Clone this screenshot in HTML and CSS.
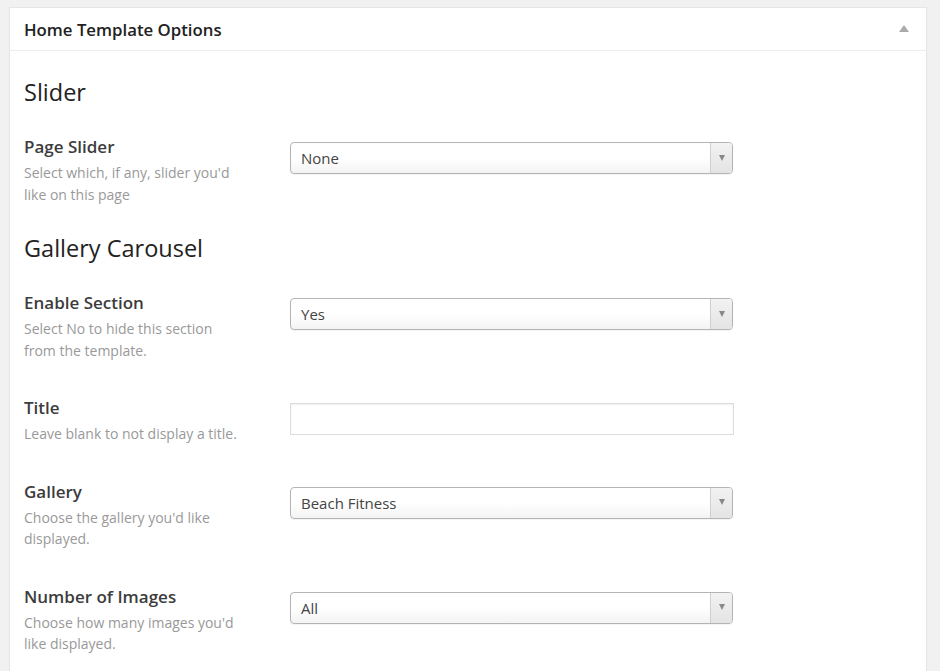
FILE: index.html
```html
<!DOCTYPE html>
<html>
<head>
<meta charset="utf-8">
<title>Home Template Options</title>
<link rel="stylesheet" href="styles.css">
</head>
<body>
<div class="postbox">
  <div class="postbox-header">
    <h2 class="postbox-title">Home Template Options</h2>
    <span class="toggle-arrow"></span>
  </div>
  <div class="inside">
    <h3 class="section-title">Slider</h3>
    <div class="field-row">
      <div class="field-label">
        <div class="label">Page Slider</div>
        <div class="desc">Select which, if any, slider you'd like on this page</div>
      </div>
      <div class="field-control">
        <div class="select-box"><span class="select-value">None</span><span class="select-arrow"><b></b></span></div>
      </div>
    </div>

    <h3 class="section-title">Gallery Carousel</h3>
    <div class="field-row">
      <div class="field-label">
        <div class="label">Enable Section</div>
        <div class="desc">Select No to hide this section from the template.</div>
      </div>
      <div class="field-control">
        <div class="select-box"><span class="select-value">Yes</span><span class="select-arrow"><b></b></span></div>
      </div>
    </div>
    <div class="field-row">
      <div class="field-label">
        <div class="label">Title</div>
        <div class="desc">Leave blank to not display a title.</div>
      </div>
      <div class="field-control">
        <input class="text-input" type="text" value="">
      </div>
    </div>
    <div class="field-row">
      <div class="field-label">
        <div class="label">Gallery</div>
        <div class="desc">Choose the gallery you'd like displayed.</div>
      </div>
      <div class="field-control">
        <div class="select-box"><span class="select-value">Beach Fitness</span><span class="select-arrow"><b></b></span></div>
      </div>
    </div>
    <div class="field-row">
      <div class="field-label">
        <div class="label">Number of Images</div>
        <div class="desc">Choose how many images you'd like displayed.</div>
      </div>
      <div class="field-control">
        <div class="select-box"><span class="select-value">All</span><span class="select-arrow"><b></b></span></div>
      </div>
    </div>
  </div>
</div>
</body>
</html>
```
FILE: styles.css
```css
html, body {
  margin: 0;
  padding: 0;
  background: #f1f1f1;
  font-family: "Open Sans", "Noto Sans", sans-serif;
  color: #444;
}
body {
  padding: 7px 13px 0 9px;
  height: 671px;
  box-sizing: border-box;
  overflow: hidden;
}
.postbox {
  background: #fff;
  border: 1px solid #e5e5e5;
  box-shadow: 0 1px 1px rgba(0,0,0,0.04);
  min-height: 700px;
}
.postbox-header {
  height: 42px;
  border-bottom: 1px solid #eee;
  display: flex;
  align-items: center;
  justify-content: space-between;
  padding: 0 17px 0 14px;
}
.postbox-title {
  margin: 0;
  font-size: 16.8px;
  font-weight: 600;
  color: #222;
  line-height: 20px;
  padding-top: 1px;
}
.toggle-arrow {
  width: 0;
  height: 0;
  border-left: 5px solid transparent;
  border-right: 5px solid transparent;
  border-bottom: 7px solid #aaa;
  margin-top: -1px;
}
.inside {
  padding: 16px 14px 0 14px;
}
.section-title {
  margin: 10px 0 11px;
  font-size: 23.5px;
  font-weight: 400;
  line-height: 30px;
  color: #222;
}
.field-row {
  display: flex;
  padding: 18px 0;
}
.field-label {
  width: 222px;
  flex: none;
  margin-right: 44px;
}
.label {
  font-size: 17px;
  font-weight: 600;
  line-height: 21px;
  color: #3c3c3c;
  margin-bottom: 5px;
}
.desc {
  font-size: 14px;
  line-height: 21.5px;
  color: #999;
}
.field-control {
  padding-top: 6px;
  width: 443px;
}
.select-box {
  display: flex;
  height: 32px;
  box-sizing: border-box;
  border: 1px solid #b4b4b4;
  border-radius: 4px;
  background: linear-gradient(to bottom, #fff 0%, #fff 50%, #f3f3f3 100%);
  box-shadow: 0 1px 1px rgba(0,0,0,0.05);
}
.select-value {
  flex: 1;
  padding-left: 10px;
  font-size: 15px;
  line-height: 30px;
  color: #444;
}
.select-arrow {
  width: 21px;
  border-left: 1px solid #cfcfcf;
  border-radius: 0 3px 3px 0;
  background: linear-gradient(to bottom, #f2f2f2 0%, #e4e4e4 100%);
  display: flex;
  align-items: center;
  justify-content: center;
}
.select-arrow b {
  width: 0;
  height: 0;
  border-left: 3.5px solid transparent;
  border-right: 3.5px solid transparent;
  border-top: 6px solid #888;
  margin-top: -1px;
}
.text-input {
  display: block;
  width: 444px;
  height: 32px;
  box-sizing: border-box;
  margin: 0;
  border: 1px solid #ddd;
  box-shadow: inset 0 1px 2px rgba(0,0,0,0.07);
  background: #fff;
  padding: 0 8px;
  font-family: inherit;
  font-size: 14px;
  outline: none;
}
```
